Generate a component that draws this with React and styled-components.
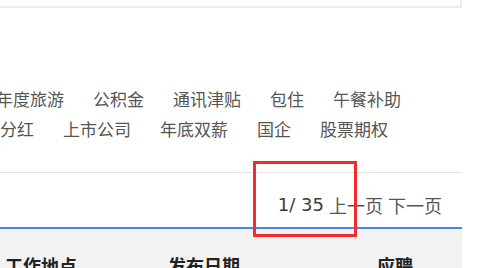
import React from 'react';
import styled, { createGlobalStyle } from 'styled-components';

const GlobalStyle = createGlobalStyle`
  html, body {
    margin: 0;
    padding: 0;
    background: #fff;
    overflow: hidden;
  }
  body {
    font-family: "Noto Sans CJK SC", "Noto Sans", sans-serif;
  }
`;

const Page = styled.div`
  position: relative;
  width: 462px;
  height: 268px;
`;

const TopCard = styled.div`
  height: 6px;
  border-right: 2px solid #ececec;
  border-bottom: 2px solid #ececec;
`;

const TagList = styled.div`
  display: flex;
  flex-direction: column;
  margin-top: 76px;
`;

const TagRow = styled.div`
  display: flex;
  gap: 29px;
  height: 30px;
  line-height: 30px;
  margin-left: ${({ $offset }) => $offset}px;
`;

const Tag = styled.span`
  font-size: 17px;
  color: #555;
  white-space: nowrap;
`;

const Divider = styled.div`
  height: 1px;
  background: #e3e3e3;
  margin-top: 28px;
`;

const Pager = styled.div`
  display: flex;
  justify-content: flex-end;
  align-items: center;
  gap: 5px;
  height: 54px;
  padding-right: 20px;
  padding-top: 9px;
  box-sizing: border-box;
  font-size: 18px;
  color: #555;
`;

const PageCount = styled.span`
  font-family: "DejaVu Sans", "Noto Sans", sans-serif;
  font-size: 18px;
  color: #3a3a3a;
`;

const PagerLink = styled.span`
  color: #555;
`;

const TableHead = styled.div`
  display: grid;
  grid-template-columns: 163px 209px 1fr;
  border-top: 2px solid #4a85e6;
  background: #f2f2f2;
  height: 60px;
  padding: 23px 0 0 5px;
  box-sizing: border-box;
`;

const HeadCell = styled.span`
  font-size: 18px;
  font-weight: 700;
  color: #222;
`;

const Highlight = styled.div`
  position: absolute;
  left: 253px;
  top: 161px;
  width: 104px;
  height: 76px;
  border: 3px solid #f52a2a;
  box-sizing: border-box;
`;

const rows = [
  { offset: -4, tags: ['年度旅游', '公积金', '通讯津贴', '包住', '午餐补助'] },
  { offset: 0, tags: ['分红', '上市公司', '年底双薪', '国企', '股票期权'] },
];

export default function App() {
  return (
    <>
      <GlobalStyle />
      <Page>
        <TopCard />
        <TagList>
          {rows.map((row, i) => (
            <TagRow key={i} $offset={row.offset}>
              {row.tags.map((t) => (
                <Tag key={t}>{t}</Tag>
              ))}
            </TagRow>
          ))}
        </TagList>
        <Divider />
        <Pager>
          <PageCount>1/ 35</PageCount>
          <PagerLink>上一页</PagerLink>
          <PagerLink>下一页</PagerLink>
        </Pager>
        <TableHead>
          <HeadCell>工作地点</HeadCell>
          <HeadCell>发布日期</HeadCell>
          <HeadCell>应聘</HeadCell>
        </TableHead>
        <Highlight />
      </Page>
    </>
  );
}
